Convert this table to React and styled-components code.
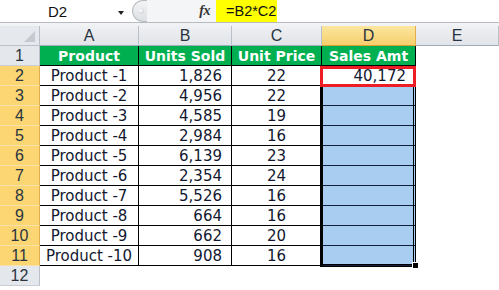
import React from "react";
import styled, { createGlobalStyle, css } from "styled-components";

const GlobalStyle = createGlobalStyle`
  html, body { margin: 0; padding: 0; background: #ffffff; }
  body { width: 499px; height: 290px; overflow: hidden; }
`;

const Sheet = styled.div`
  width: 499px;
  display: flex;
  flex-direction: column;
  background: #ffffff;
`;

const FormulaBar = styled.div`
  display: flex;
  height: 22px;
  border-bottom: 1px solid #b8bcc2;
  font-family: "Liberation Sans", Arial, sans-serif;
  font-size: 14px;
  color: #111;
`;

const NameBox = styled.div`
  position: relative;
  flex: 0 0 132px;
  display: flex;
  align-items: center;
  justify-content: center;
  padding-right: 17px;
  box-sizing: border-box;
  background: #fff;
  font-size: 15px;
`;

const Arrow = styled.span`
  position: absolute;
  right: 8px;
  top: 11px;
  width: 0;
  height: 0;
  border-left: 3.5px solid transparent;
  border-right: 3.5px solid transparent;
  border-top: 4px solid #222;
`;

const Splitter = styled.div`
  flex: 0 0 15px;
  position: relative;
  background: linear-gradient(#f3f4f5, #dcdfe3);
  border-radius: 11px 0 0 11px;
  border: 1px solid #b9bdc3;
  border-right: none;
  box-sizing: border-box;
  &::after {
    content: "";
    position: absolute;
    left: 5px;
    top: 7px;
    width: 6px;
    height: 6px;
    border-radius: 50%;
    background: radial-gradient(circle at 40% 40%, #ffffff, #c2c6cb);
  }
`;

const FxArea = styled.div`
  flex: 0 0 69px;
  display: flex;
  align-items: center;
  justify-content: flex-end;
  padding-right: 6px;
  box-sizing: border-box;
  background: #f4f5f6;
  font-family: "Liberation Serif", "Times New Roman", serif;
  font-style: italic;
  font-weight: bold;
  font-size: 14px;
  color: #333;
  letter-spacing: -0.5px;
`;

const FormulaInput = styled.div`
  flex: 1;
  display: flex;
  align-items: stretch;
  background: #fff;
`;

const Highlight = styled.span`
  display: flex;
  align-items: center;
  padding: 0 2px 0 10px;
  width: 61px;
  box-sizing: border-box;
  background: #ffff00;
  font-size: 14.5px;
`;

const Spacer = styled.div`
  height: 3px;
  background: #f1f2f3;
`;

const Grid = styled.div`
  position: relative;
  display: grid;
  grid-template-columns: 40px 99px 93px 90px 94px 83px;
  grid-auto-rows: 20px;
`;

const Corner = styled.div`
  position: relative;
  background: #e5e8ec;
  border-right: 1px solid #b9c0ca;
  border-bottom: 1px solid #b9c0ca;
  box-sizing: border-box;
  &::after {
    content: "";
    position: absolute;
    right: 4px;
    bottom: 3px;
    width: 0;
    height: 0;
    border-left: 11px solid transparent;
    border-bottom: 11px solid #c6cad0;
  }
`;

const ColHead = styled.div`
  display: flex;
  align-items: center;
  justify-content: center;
  box-sizing: border-box;
  font-family: "Liberation Sans", Arial, sans-serif;
  font-size: 16px;
  color: #2a3440;
  background: linear-gradient(#eef0f3, #e1e4e8);
  border-right: 1px solid #b9c0ca;
  border-bottom: 1px solid #9eabb9;
  ${(p) =>
    p.$active &&
    css`
      background: linear-gradient(#fbe6a0, #f7cf6c);
      border-right: 1px solid #e2ad4a;
      border-bottom: 1px solid #d99f35;
    `}
`;

const RowHead = styled.div`
  display: flex;
  align-items: center;
  justify-content: center;
  box-sizing: border-box;
  font-family: "Liberation Sans", Arial, sans-serif;
  font-size: 16px;
  color: #2a3440;
  background: #e4e7eb;
  border-right: 1px solid #b9c0ca;
  border-bottom: 1px solid #c9ced5;
  ${(p) =>
    p.$active &&
    css`
      background: #fbd672;
      border-right: 1px solid #e2ad4a;
      border-bottom: 1px solid #f6e2a8;
    `}
`;

const Cell = styled.div`
  position: relative;
  display: flex;
  align-items: center;
  box-sizing: border-box;
  white-space: nowrap;
  font-family: "DejaVu Sans", Verdana, sans-serif;
  font-size: 15px;
  color: #121830;
  border-right: 1px solid #000;
  border-bottom: 1px solid #000;
  justify-content: ${(p) =>
    p.$align === "right" ? "flex-end" : p.$align === "left" ? "flex-start" : "center"};
  padding-right: ${(p) => (p.$align === "right" ? "9px" : "0")};
  ${(p) =>
    p.$head &&
    css`
      background: #00b050;
      color: #ffffff;
      font-weight: bold;
      font-size: 14px;
    `}
  ${(p) =>
    p.$fill &&
    css`
      background: #a8cdf0;
      border-bottom-color: #0f1f3c;
    `}
  ${(p) =>
    p.$marked &&
    css`
      &::after {
        content: "";
        position: absolute;
        z-index: 3;
        top: 0;
        left: -2px;
        right: -1px;
        bottom: -2px;
        border: 3px solid #ee1c25;
      }
    `}
`;

const Blank = styled.div`
  background: #ffffff;
`;

const Selection = styled.div`
  position: absolute;
  z-index: 2;
  left: 320px;
  top: 40px;
  width: 96px;
  height: 201px;
  box-sizing: border-box;
  border: 3px double #000;
  pointer-events: none;
`;

const Handle = styled.div`
  position: absolute;
  z-index: 4;
  left: 412px;
  top: 236px;
  width: 5px;
  height: 5px;
  background: #000;
  border: 1px solid #fff;
`;

const headers = ["Product", "Units Sold", "Unit Price", "Sales Amt"];

const rows = [
  ["Product -1", "1,826", "22", "40,172"],
  ["Product -2", "4,956", "22", ""],
  ["Product -3", "4,585", "19", ""],
  ["Product -4", "2,984", "16", ""],
  ["Product -5", "6,139", "23", ""],
  ["Product -6", "2,354", "24", ""],
  ["Product -7", "5,526", "16", ""],
  ["Product -8", "664", "16", ""],
  ["Product -9", "662", "20", ""],
  ["Product -10", "908", "16", ""],
];

export default function App() {
  return (
    <>
      <GlobalStyle />
      <Sheet>
        <FormulaBar>
          <NameBox>
            D2
            <Arrow />
          </NameBox>
          <Splitter />
          <FxArea>fx</FxArea>
          <FormulaInput>
            <Highlight>=B2*C2</Highlight>
          </FormulaInput>
        </FormulaBar>
        <Spacer />
        <Grid>
          <Corner />
          {["A", "B", "C", "D", "E"].map((l) => (
            <ColHead key={l} $active={l === "D"}>
              {l}
            </ColHead>
          ))}

          <RowHead>1</RowHead>
          {headers.map((h) => (
            <Cell key={h} $head>
              {h}
            </Cell>
          ))}
          <Blank />

          {rows.map((r, i) => (
            <React.Fragment key={r[0]}>
              <RowHead $active>{i + 2}</RowHead>
              <Cell>{r[0]}</Cell>
              <Cell $align="right">{r[1]}</Cell>
              <Cell>{r[2]}</Cell>
              {i === 0 ? (
                <Cell $align="right" $marked>
                  {r[3]}
                </Cell>
              ) : (
                <Cell $fill />
              )}
              <Blank />
            </React.Fragment>
          ))}

          <RowHead>12</RowHead>
          <Blank />
          <Blank />
          <Blank />
          <Blank />
          <Blank />
          <Selection />
          <Handle />
        </Grid>
      </Sheet>
    </>
  );
}
